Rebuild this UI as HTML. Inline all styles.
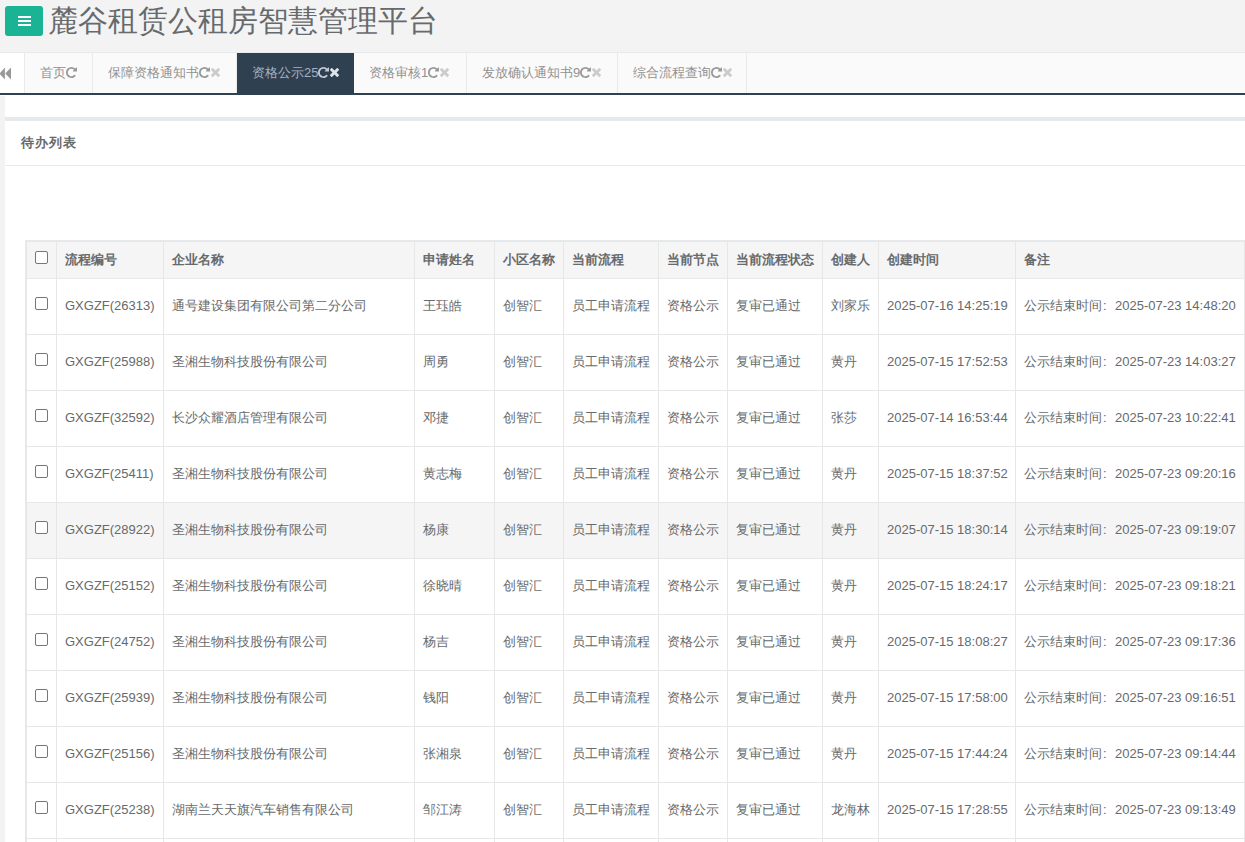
<!DOCTYPE html>
<html><head><meta charset="utf-8">
<style>
*{box-sizing:border-box;margin:0;padding:0}
html,body{width:1245px;height:842px;overflow:hidden;background:#fff;font-family:"Liberation Sans",sans-serif;color:#676a6c;position:relative}
.hdr{position:absolute;left:0;top:0;width:1245px;height:53px;background:#f3f3f4;border-bottom:1px solid #e7eaec}
.btn{position:absolute;left:5px;top:6px;width:38px;height:30px;background:#1ab394;border-radius:3px}
.btn i{position:absolute;left:13px;width:13px;height:2px;background:#fff}
.title{position:absolute;left:48px;top:2px;font-size:30px;line-height:38px;color:#676a6c;white-space:nowrap}
.tabs{position:absolute;left:0;top:53px;width:1245px;height:42px;background:#fafafa;border-bottom:2px solid #2f4050}
.tab{position:absolute;top:0;height:40px;line-height:40px;font-size:13px;color:#919191;background:#fafafa;border-right:1px solid #eaeaea;white-space:nowrap;padding-left:15px}
.tab.act{background:#2f4050;color:#a7b1c2;border-right:none}
.tab svg{display:inline-block;vertical-align:top;position:relative}
.rf{width:11px;height:11px;top:14px;margin-left:0}
.cl{width:9px;height:9px;top:15px;margin-left:1px}
.larr{position:absolute;left:0;top:0;width:25px;height:40px;background:#fff;border-right:1px solid #eaeaea}
.lstrip{position:absolute;left:0;top:96px;width:5px;height:746px;background:#f3f3f4}
.ibox{position:absolute;left:5px;top:117px;width:1240px;height:4px;background:#e7eaec}
.ititle{position:absolute;left:21px;top:134px;font-size:13px;letter-spacing:1px;font-weight:bold;line-height:18px;color:#676a6c;white-space:nowrap}
.iline{position:absolute;left:5px;top:165px;width:1240px;height:1px;background:#e7eaec}
.thbg{position:absolute;left:26px;top:241px;width:1219px;height:37px;background:#f5f5f6}
.hov{position:absolute;left:26px;top:503px;width:1219px;height:55px;background:#f5f5f5}
.vl{position:absolute;top:240px;width:1px;height:602px;background:#e7e7e7}
.hl{position:absolute;left:25px;width:1220px;height:1px;background:#e7e7e7}
.hl.b,.vl.b{background:#e7eaec}
.th,.td{position:absolute;font-size:13px;line-height:18px;white-space:nowrap;color:#676a6c}
.th{font-weight:bold}
.col{display:inline-block;width:13px;padding-left:1px}
.cb{position:absolute;width:13px;height:13px;border:1px solid #767676;border-radius:2px;background:#fff}
</style></head><body>
<div class="hdr">
  <div class="btn"><i style="top:10px"></i><i style="top:14px"></i><i style="top:18px"></i></div>
  <div class="title">麓谷租赁公租房智慧管理平台</div>
</div>
<div class="tabs">
  <div class="larr"><svg width="12" height="13" style="position:absolute;left:0;top:14px" viewBox="0 0 12 13"><path d="M4.9 0.6 L-0.6 6.6 L4.9 12.6Z M11 0.6 L5.2 6.6 L11 12.6Z" fill="#999"/></svg></div>
<div class="tab" style="left:25px;width:68px">首页<svg class="rf" viewBox="0 128 1536 1536"><path d="M1536 256v448q0 26-19 45t-45 19h-448q-42 0-59-40-17-39 14-69l138-138q-148-137-349-137-104 0-198.5 40.5t-163.5 109.5-109.5 163.5-40.5 198.5 40.5 198.5 109.5 163.5 163.5 109.5 198.5 40.5q119 0 225-52t179-147q7-10 23-12 15 0 25 9l137 138q9 8 9.5 20.5t-7.5 22.5q-109 132-264 204.5t-327 72.5q-156 0-298-61t-245-164-164-245-61-298 61-298 164-245 245-164 298-61q147 0 284.5 55.5t244.5 156.5l130-129q29-31 70-14 39 17 39 59z" fill="#999"/></svg></div>
<div class="tab" style="left:93px;width:144px">保障资格通知书<svg class="rf" viewBox="0 128 1536 1536"><path d="M1536 256v448q0 26-19 45t-45 19h-448q-42 0-59-40-17-39 14-69l138-138q-148-137-349-137-104 0-198.5 40.5t-163.5 109.5-109.5 163.5-40.5 198.5 40.5 198.5 109.5 163.5 163.5 109.5 198.5 40.5q119 0 225-52t179-147q7-10 23-12 15 0 25 9l137 138q9 8 9.5 20.5t-7.5 22.5q-109 132-264 204.5t-327 72.5q-156 0-298-61t-245-164-164-245-61-298 61-298 164-245 245-164 298-61q147 0 284.5 55.5t244.5 156.5l130-129q29-31 70-14 39 17 39 59z" fill="#999"/></svg><svg class="cl" viewBox="110 258 1188 1188"><path d="M1298 1214q0 40-28 68l-136 136q-28 28-68 28t-68-28l-294-294-294 294q-28 28-68 28t-68-28l-136-136q-28-28-28-68t28-68l294-294-294-294q-28-28-28-68t28-68l136-136q28-28 68-28t68 28l294 294 294-294q28-28 68-28t68 28l136 136q28 28 28 68t-28 68l-294 294 294 294q28 28 28 68z" fill="#ccc"/></svg></div>
<div class="tab act" style="left:237px;width:117px">资格公示25<svg class="rf" viewBox="0 128 1536 1536"><path d="M1536 256v448q0 26-19 45t-45 19h-448q-42 0-59-40-17-39 14-69l138-138q-148-137-349-137-104 0-198.5 40.5t-163.5 109.5-109.5 163.5-40.5 198.5 40.5 198.5 109.5 163.5 163.5 109.5 198.5 40.5q119 0 225-52t179-147q7-10 23-12 15 0 25 9l137 138q9 8 9.5 20.5t-7.5 22.5q-109 132-264 204.5t-327 72.5q-156 0-298-61t-245-164-164-245-61-298 61-298 164-245 245-164 298-61q147 0 284.5 55.5t244.5 156.5l130-129q29-31 70-14 39 17 39 59z" fill="#c0c8d4"/></svg><svg class="cl" viewBox="110 258 1188 1188"><path d="M1298 1214q0 40-28 68l-136 136q-28 28-68 28t-68-28l-294-294-294 294q-28 28-68 28t-68-28l-136-136q-28-28-28-68t28-68l294-294-294-294q-28-28-28-68t28-68l136-136q28-28 68-28t68 28l294 294 294-294q28-28 68-28t68 28l136 136q28 28 28 68t-28 68l-294 294 294 294q28 28 28 68z" fill="#dfe3ea"/></svg></div>
<div class="tab" style="left:354px;width:113px">资格审核1<svg class="rf" viewBox="0 128 1536 1536"><path d="M1536 256v448q0 26-19 45t-45 19h-448q-42 0-59-40-17-39 14-69l138-138q-148-137-349-137-104 0-198.5 40.5t-163.5 109.5-109.5 163.5-40.5 198.5 40.5 198.5 109.5 163.5 163.5 109.5 198.5 40.5q119 0 225-52t179-147q7-10 23-12 15 0 25 9l137 138q9 8 9.5 20.5t-7.5 22.5q-109 132-264 204.5t-327 72.5q-156 0-298-61t-245-164-164-245-61-298 61-298 164-245 245-164 298-61q147 0 284.5 55.5t244.5 156.5l130-129q29-31 70-14 39 17 39 59z" fill="#999"/></svg><svg class="cl" viewBox="110 258 1188 1188"><path d="M1298 1214q0 40-28 68l-136 136q-28 28-68 28t-68-28l-294-294-294 294q-28 28-68 28t-68-28l-136-136q-28-28-28-68t28-68l294-294-294-294q-28-28-28-68t28-68l136-136q28-28 68-28t68 28l294 294 294-294q28-28 68-28t68 28l136 136q28 28 28 68t-28 68l-294 294 294 294q28 28 28 68z" fill="#ccc"/></svg></div>
<div class="tab" style="left:467px;width:151px">发放确认通知书9<svg class="rf" viewBox="0 128 1536 1536"><path d="M1536 256v448q0 26-19 45t-45 19h-448q-42 0-59-40-17-39 14-69l138-138q-148-137-349-137-104 0-198.5 40.5t-163.5 109.5-109.5 163.5-40.5 198.5 40.5 198.5 109.5 163.5 163.5 109.5 198.5 40.5q119 0 225-52t179-147q7-10 23-12 15 0 25 9l137 138q9 8 9.5 20.5t-7.5 22.5q-109 132-264 204.5t-327 72.5q-156 0-298-61t-245-164-164-245-61-298 61-298 164-245 245-164 298-61q147 0 284.5 55.5t244.5 156.5l130-129q29-31 70-14 39 17 39 59z" fill="#999"/></svg><svg class="cl" viewBox="110 258 1188 1188"><path d="M1298 1214q0 40-28 68l-136 136q-28 28-68 28t-68-28l-294-294-294 294q-28 28-68 28t-68-28l-136-136q-28-28-28-68t28-68l294-294-294-294q-28-28-28-68t28-68l136-136q28-28 68-28t68 28l294 294 294-294q28-28 68-28t68 28l136 136q28 28 28 68t-28 68l-294 294 294 294q28 28 28 68z" fill="#ccc"/></svg></div>
<div class="tab" style="left:618px;width:129px">综合流程查询<svg class="rf" viewBox="0 128 1536 1536"><path d="M1536 256v448q0 26-19 45t-45 19h-448q-42 0-59-40-17-39 14-69l138-138q-148-137-349-137-104 0-198.5 40.5t-163.5 109.5-109.5 163.5-40.5 198.5 40.5 198.5 109.5 163.5 163.5 109.5 198.5 40.5q119 0 225-52t179-147q7-10 23-12 15 0 25 9l137 138q9 8 9.5 20.5t-7.5 22.5q-109 132-264 204.5t-327 72.5q-156 0-298-61t-245-164-164-245-61-298 61-298 164-245 245-164 298-61q147 0 284.5 55.5t244.5 156.5l130-129q29-31 70-14 39 17 39 59z" fill="#999"/></svg><svg class="cl" viewBox="110 258 1188 1188"><path d="M1298 1214q0 40-28 68l-136 136q-28 28-68 28t-68-28l-294-294-294 294q-28 28-68 28t-68-28l-136-136q-28-28-28-68t28-68l294-294-294-294q-28-28-28-68t28-68l136-136q28-28 68-28t68 28l294 294 294-294q28-28 68-28t68 28l136 136q28 28 28 68t-28 68l-294 294 294 294q28 28 28 68z" fill="#ccc"/></svg></div>
</div>
<div class="lstrip"></div>
<div class="ibox"></div>
<div class="ititle">待办列表</div>
<div class="iline"></div>
<div class="thbg"></div>
<div class="hov"></div>
<div class="vl b" style="left:25px"></div>
<div class="vl" style="left:56px"></div>
<div class="vl" style="left:163px"></div>
<div class="vl" style="left:414px"></div>
<div class="vl" style="left:494px"></div>
<div class="vl" style="left:563px"></div>
<div class="vl" style="left:658px"></div>
<div class="vl" style="left:727px"></div>
<div class="vl" style="left:822px"></div>
<div class="vl" style="left:878px"></div>
<div class="vl" style="left:1015px"></div>
<div class="hl b" style="top:240px"></div>
<div class="hl" style="top:241px;left:26px"></div>
<div class="vl" style="left:26px;top:241px"></div>
<div class="vl" style="left:1244px;top:241px"></div>
<div class="hl b" style="top:278px"></div>
<div class="hl" style="top:334px"></div>
<div class="hl" style="top:390px"></div>
<div class="hl" style="top:446px"></div>
<div class="hl" style="top:502px"></div>
<div class="hl" style="top:558px"></div>
<div class="hl" style="top:614px"></div>
<div class="hl" style="top:670px"></div>
<div class="hl" style="top:726px"></div>
<div class="hl" style="top:782px"></div>
<div class="hl" style="top:838px"></div>
<div class="hl" style="top:894px"></div>
<div class="cb" style="left:35px;top:251px"></div>
<div class="th" style="left:65px;top:251px">流程编号</div>
<div class="th" style="left:172px;top:251px">企业名称</div>
<div class="th" style="left:423px;top:251px">申请姓名</div>
<div class="th" style="left:503px;top:251px">小区名称</div>
<div class="th" style="left:572px;top:251px">当前流程</div>
<div class="th" style="left:667px;top:251px">当前节点</div>
<div class="th" style="left:736px;top:251px">当前流程状态</div>
<div class="th" style="left:831px;top:251px">创建人</div>
<div class="th" style="left:887px;top:251px">创建时间</div>
<div class="th" style="left:1024px;top:251px">备注</div>
<div class="cb" style="left:35px;top:297px"></div>
<div class="td" style="left:65px;top:297px">GXGZF(26313)</div>
<div class="td" style="left:172px;top:297px">通号建设集团有限公司第二分公司</div>
<div class="td" style="left:423px;top:297px">王珏皓</div>
<div class="td" style="left:503px;top:297px">创智汇</div>
<div class="td" style="left:572px;top:297px">员工申请流程</div>
<div class="td" style="left:667px;top:297px">资格公示</div>
<div class="td" style="left:736px;top:297px">复审已通过</div>
<div class="td" style="left:831px;top:297px">刘家乐</div>
<div class="td" style="left:887px;top:297px">2025-07-16 14:25:19</div>
<div class="td" style="left:1024px;top:297px">公示结束时间<span class="col">:</span>2025-07-23 14:48:20</div>
<div class="cb" style="left:35px;top:353px"></div>
<div class="td" style="left:65px;top:353px">GXGZF(25988)</div>
<div class="td" style="left:172px;top:353px">圣湘生物科技股份有限公司</div>
<div class="td" style="left:423px;top:353px">周勇</div>
<div class="td" style="left:503px;top:353px">创智汇</div>
<div class="td" style="left:572px;top:353px">员工申请流程</div>
<div class="td" style="left:667px;top:353px">资格公示</div>
<div class="td" style="left:736px;top:353px">复审已通过</div>
<div class="td" style="left:831px;top:353px">黄丹</div>
<div class="td" style="left:887px;top:353px">2025-07-15 17:52:53</div>
<div class="td" style="left:1024px;top:353px">公示结束时间<span class="col">:</span>2025-07-23 14:03:27</div>
<div class="cb" style="left:35px;top:409px"></div>
<div class="td" style="left:65px;top:409px">GXGZF(32592)</div>
<div class="td" style="left:172px;top:409px">长沙众耀酒店管理有限公司</div>
<div class="td" style="left:423px;top:409px">邓捷</div>
<div class="td" style="left:503px;top:409px">创智汇</div>
<div class="td" style="left:572px;top:409px">员工申请流程</div>
<div class="td" style="left:667px;top:409px">资格公示</div>
<div class="td" style="left:736px;top:409px">复审已通过</div>
<div class="td" style="left:831px;top:409px">张莎</div>
<div class="td" style="left:887px;top:409px">2025-07-14 16:53:44</div>
<div class="td" style="left:1024px;top:409px">公示结束时间<span class="col">:</span>2025-07-23 10:22:41</div>
<div class="cb" style="left:35px;top:465px"></div>
<div class="td" style="left:65px;top:465px">GXGZF(25411)</div>
<div class="td" style="left:172px;top:465px">圣湘生物科技股份有限公司</div>
<div class="td" style="left:423px;top:465px">黄志梅</div>
<div class="td" style="left:503px;top:465px">创智汇</div>
<div class="td" style="left:572px;top:465px">员工申请流程</div>
<div class="td" style="left:667px;top:465px">资格公示</div>
<div class="td" style="left:736px;top:465px">复审已通过</div>
<div class="td" style="left:831px;top:465px">黄丹</div>
<div class="td" style="left:887px;top:465px">2025-07-15 18:37:52</div>
<div class="td" style="left:1024px;top:465px">公示结束时间<span class="col">:</span>2025-07-23 09:20:16</div>
<div class="cb" style="left:35px;top:521px"></div>
<div class="td" style="left:65px;top:521px">GXGZF(28922)</div>
<div class="td" style="left:172px;top:521px">圣湘生物科技股份有限公司</div>
<div class="td" style="left:423px;top:521px">杨康</div>
<div class="td" style="left:503px;top:521px">创智汇</div>
<div class="td" style="left:572px;top:521px">员工申请流程</div>
<div class="td" style="left:667px;top:521px">资格公示</div>
<div class="td" style="left:736px;top:521px">复审已通过</div>
<div class="td" style="left:831px;top:521px">黄丹</div>
<div class="td" style="left:887px;top:521px">2025-07-15 18:30:14</div>
<div class="td" style="left:1024px;top:521px">公示结束时间<span class="col">:</span>2025-07-23 09:19:07</div>
<div class="cb" style="left:35px;top:577px"></div>
<div class="td" style="left:65px;top:577px">GXGZF(25152)</div>
<div class="td" style="left:172px;top:577px">圣湘生物科技股份有限公司</div>
<div class="td" style="left:423px;top:577px">徐晓晴</div>
<div class="td" style="left:503px;top:577px">创智汇</div>
<div class="td" style="left:572px;top:577px">员工申请流程</div>
<div class="td" style="left:667px;top:577px">资格公示</div>
<div class="td" style="left:736px;top:577px">复审已通过</div>
<div class="td" style="left:831px;top:577px">黄丹</div>
<div class="td" style="left:887px;top:577px">2025-07-15 18:24:17</div>
<div class="td" style="left:1024px;top:577px">公示结束时间<span class="col">:</span>2025-07-23 09:18:21</div>
<div class="cb" style="left:35px;top:633px"></div>
<div class="td" style="left:65px;top:633px">GXGZF(24752)</div>
<div class="td" style="left:172px;top:633px">圣湘生物科技股份有限公司</div>
<div class="td" style="left:423px;top:633px">杨吉</div>
<div class="td" style="left:503px;top:633px">创智汇</div>
<div class="td" style="left:572px;top:633px">员工申请流程</div>
<div class="td" style="left:667px;top:633px">资格公示</div>
<div class="td" style="left:736px;top:633px">复审已通过</div>
<div class="td" style="left:831px;top:633px">黄丹</div>
<div class="td" style="left:887px;top:633px">2025-07-15 18:08:27</div>
<div class="td" style="left:1024px;top:633px">公示结束时间<span class="col">:</span>2025-07-23 09:17:36</div>
<div class="cb" style="left:35px;top:689px"></div>
<div class="td" style="left:65px;top:689px">GXGZF(25939)</div>
<div class="td" style="left:172px;top:689px">圣湘生物科技股份有限公司</div>
<div class="td" style="left:423px;top:689px">钱阳</div>
<div class="td" style="left:503px;top:689px">创智汇</div>
<div class="td" style="left:572px;top:689px">员工申请流程</div>
<div class="td" style="left:667px;top:689px">资格公示</div>
<div class="td" style="left:736px;top:689px">复审已通过</div>
<div class="td" style="left:831px;top:689px">黄丹</div>
<div class="td" style="left:887px;top:689px">2025-07-15 17:58:00</div>
<div class="td" style="left:1024px;top:689px">公示结束时间<span class="col">:</span>2025-07-23 09:16:51</div>
<div class="cb" style="left:35px;top:745px"></div>
<div class="td" style="left:65px;top:745px">GXGZF(25156)</div>
<div class="td" style="left:172px;top:745px">圣湘生物科技股份有限公司</div>
<div class="td" style="left:423px;top:745px">张湘泉</div>
<div class="td" style="left:503px;top:745px">创智汇</div>
<div class="td" style="left:572px;top:745px">员工申请流程</div>
<div class="td" style="left:667px;top:745px">资格公示</div>
<div class="td" style="left:736px;top:745px">复审已通过</div>
<div class="td" style="left:831px;top:745px">黄丹</div>
<div class="td" style="left:887px;top:745px">2025-07-15 17:44:24</div>
<div class="td" style="left:1024px;top:745px">公示结束时间<span class="col">:</span>2025-07-23 09:14:44</div>
<div class="cb" style="left:35px;top:801px"></div>
<div class="td" style="left:65px;top:801px">GXGZF(25238)</div>
<div class="td" style="left:172px;top:801px">湖南兰天天旗汽车销售有限公司</div>
<div class="td" style="left:423px;top:801px">邹江涛</div>
<div class="td" style="left:503px;top:801px">创智汇</div>
<div class="td" style="left:572px;top:801px">员工申请流程</div>
<div class="td" style="left:667px;top:801px">资格公示</div>
<div class="td" style="left:736px;top:801px">复审已通过</div>
<div class="td" style="left:831px;top:801px">龙海林</div>
<div class="td" style="left:887px;top:801px">2025-07-15 17:28:55</div>
<div class="td" style="left:1024px;top:801px">公示结束时间<span class="col">:</span>2025-07-23 09:13:49</div>
</body></html>
